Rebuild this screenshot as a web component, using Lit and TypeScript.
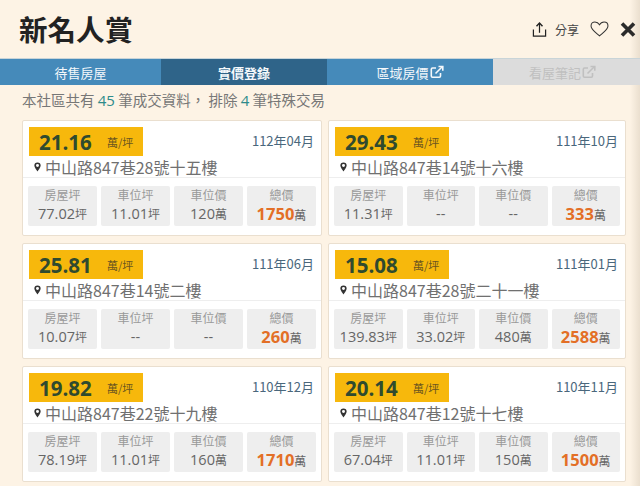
import { LitElement, html, css } from "lit";
import { customElement } from "lit/decorators.js";

const extIcon = html`<svg class="ext" viewBox="0 0 14 14" width="14" height="14" fill="none" stroke="currentColor" stroke-width="1.6"><path d="M6 3H2.500A1.200 1.200 0 0 0 1.300 4.200V11a1.200 1.200 0 0 0 1.200 1.200H9.300A1.200 1.200 0 0 0 10.500 11V8"/><path d="M5.500 8.500 12 2"/><path d="M8.500 1.500H12.800V5.800"/></svg>`;
const pin = html`<svg class="pin" viewBox="0 0 8 11" width="7" height="10"><path fill-rule="evenodd" fill="#333" d="M4 .3A3.600 3.600 0 0 0 .4 3.900C.4 6.300 4 10.700 4 10.700S7.600 6.300 7.600 3.900A3.600 3.600 0 0 0 4 .3ZM4 2.200A1.700 1.700 0 1 1 4 5.600 1.700 1.700 0 0 1 4 2.200Z"/></svg>`;

type C = { p: string; d: string; a: string; v: string[] };
const cards: C[] = [
  { p: "21.16", d: "112年04月", a: "中山路847巷28號十五樓", v: ["77.02", "11.01", "120", "1750"] },
  { p: "29.43", d: "111年10月", a: "中山路847巷14號十六樓", v: ["11.31", "--", "--", "333"] },
  { p: "25.81", d: "111年06月", a: "中山路847巷14號二樓", v: ["10.07", "--", "--", "260"] },
  { p: "15.08", d: "111年01月", a: "中山路847巷28號二十一樓", v: ["139.83", "33.02", "480", "2588"] },
  { p: "19.82", d: "110年12月", a: "中山路847巷22號十九樓", v: ["78.19", "11.01", "160", "1710"] },
  { p: "20.14", d: "110年11月", a: "中山路847巷12號十七樓", v: ["67.04", "11.01", "150", "1500"] },
];
const labels = ["房屋坪", "車位坪", "車位價", "總價"];
const units = ["坪", "坪", "萬", "萬"];

@customElement("app-root")
export class AppRoot extends LitElement {
  static styles = css`
    :host {
      display: block;
      width: 640px;
      height: 486px;
      overflow: hidden;
      background: linear-gradient(90deg, rgba(0,0,0,0) 630px, rgba(120,100,70,.14) 640px), #fdf3e5;
      font-family: "Noto Sans CJK TC", "Open Sans", sans-serif;
      color: #333;
    }
    .head {
      height: 58px;
      display: flex;
      align-items: center;
      padding: 0 4px 0 19px;
      box-sizing: border-box;
    }
    h1 {
      margin: 0;
      font-size: 28.500px;
      font-weight: 700;
      line-height: 1;
      color: #222;
      flex: 1;
    }
    .share { font-size: 12px; color: #444; margin: 0 11px 0 8px; }
    .close { margin-left: 11px; display: block; }
    .tabs {
      display: grid;
      grid-template-columns: 161px 166px 166px 1fr;
      height: 27px;
      font-size: 13px;
      border-top: 1px solid #c9d4d8;
      box-sizing: border-box;
    }
    .tab { background: #458aba; color: #f4f8fb; display: flex; align-items: center; justify-content: center; gap: 1px; }
    .tab.on { background: #2f6489; font-weight: 700; }
    .tab.off { background: #dcdcdc; color: #c0c0c0; padding-right: 8px; }
    .ext { display: block; }
    .sum {
      padding: 3px 0 0 22px;
      height: 30px;
      box-sizing: border-box;
      font-size: 14.500px;
      line-height: 24px;
      color: #777;
    }
    .sum b { font-weight: 400; color: #2e8b8b; font-family: "Open Sans", sans-serif; font-size: 15px; }
    .grid {
      display: grid;
      grid-template-columns: 300px 298px;
      gap: 7px 6px;
      padding: 5px 0 0 22px;
    }
    .card {
      background: #fff;
      border: 1px solid #eadfcf;
      border-radius: 2px;
      height: 116px;
      box-sizing: border-box;
      display: flex;
      flex-direction: column;
    }
    .top {
      display: flex;
      align-items: flex-start;
      justify-content: space-between;
      padding: 6px 7px 0 6px;
    }
    .price {
      background: #f7b80c;
      width: 114px;
      height: 29px;
      display: flex;
      align-items: center;
      box-sizing: border-box;
      padding-left: 10px;
    }
    .price strong {
      font-family: "Open Sans", sans-serif;
      font-size: 20.500px;
      font-weight: 700;
      color: #2f4a2f;
      width: 68px;
      flex: none;
    }
    .price span { font-size: 11px; color: #6a5520; }
    .date { font-size: 13px; color: #4a677c; line-height: 28px; }
    .addr {
      height: 22px;
      display: flex;
      align-items: center;
      gap: 4px;
      padding-left: 11px;
      font-size: 16px;
      color: #707070;
      border-bottom: 1px solid #eee;
      box-sizing: border-box;
      white-space: nowrap;
    }
    .stats {
      display: grid;
      grid-template-columns: repeat(4, 1fr);
      gap: 4px;
      padding: 8px 5px 0 5px;
    }
    .stat {
      background: #eee;
      height: 40px;
      border-radius: 2px;
      box-sizing: border-box;
      padding-top: 1px;
      display: flex;
      flex-direction: column;
      align-items: center;
    }
    .lab { font-size: 12px; line-height: 16px; color: #999; }
    .val { font-size: 14.500px; line-height: 21px; color: #666; white-space: nowrap; font-family: "Open Sans", sans-serif; }
    .val small { font-size: 12px; font-family: "Noto Sans CJK TC", sans-serif; }
    .val.tot { font-weight: 700; color: #e36f26; font-size: 16.500px; }
    .val.tot small { font-weight: 400; color: #666; }
  `;

  render() {
    return html`
      <div class="head">
        <h1>新名人賞</h1>
        <svg width="15" height="17" viewBox="0 0 16 17" fill="none" stroke="#222" stroke-width="1.300"><path d="M1.500 8.500V15.500H14.500V8.500"/><path d="M8 12V1.500"/><path d="M4.800 5 8 1.500 11.200 5" stroke-width="1.500"/></svg>
        <span class="share">分享</span>
        <svg width="19" height="16" viewBox="0 0 20 17" fill="none" stroke="#333" stroke-width="1.100"><path d="M10 15.800C7 13 1 9 1 5.200 1 2.600 3 1 5.200 1 7.300 1 9 2.300 10 4 11 2.300 12.700 1 14.800 1 17 1 19 2.600 19 5.200 19 9 13 13 10 15.800Z"/></svg>
        <svg class="close" width="16" height="15" viewBox="0 0 15 15" stroke="#2b2b2b" stroke-width="3.600"><path d="M1.500 1.500 13.500 13.500M13.500 1.500 1.500 13.500"/></svg>
      </div>
      <div class="tabs">
        <div class="tab">待售房屋</div>
        <div class="tab on">實價登錄</div>
        <div class="tab">區域房價${extIcon}</div>
        <div class="tab off">看屋筆記${extIcon}</div>
      </div>
      <div class="sum">本社區共有 <b>45</b> 筆成交資料， 排除 <b>4</b> 筆特殊交易</div>
      <div class="grid">
        ${cards.map((c) => html`
          <div class="card">
            <div class="top">
              <div class="price"><strong>${c.p}</strong><span>萬/坪</span></div>
              <div class="date">${c.d}</div>
            </div>
            <div class="addr">${pin}${c.a}</div>
            <div class="stats">
              ${labels.map((l, i) => html`
                <div class="stat">
                  <div class="lab">${l}</div>
                  <div class="val ${i === 3 ? "tot" : ""}">${c.v[i]}${c.v[i] === "--" ? "" : html`<small>${units[i]}</small>`}</div>
                </div>`)}
            </div>
          </div>`)}
      </div>
    `;
  }
}
